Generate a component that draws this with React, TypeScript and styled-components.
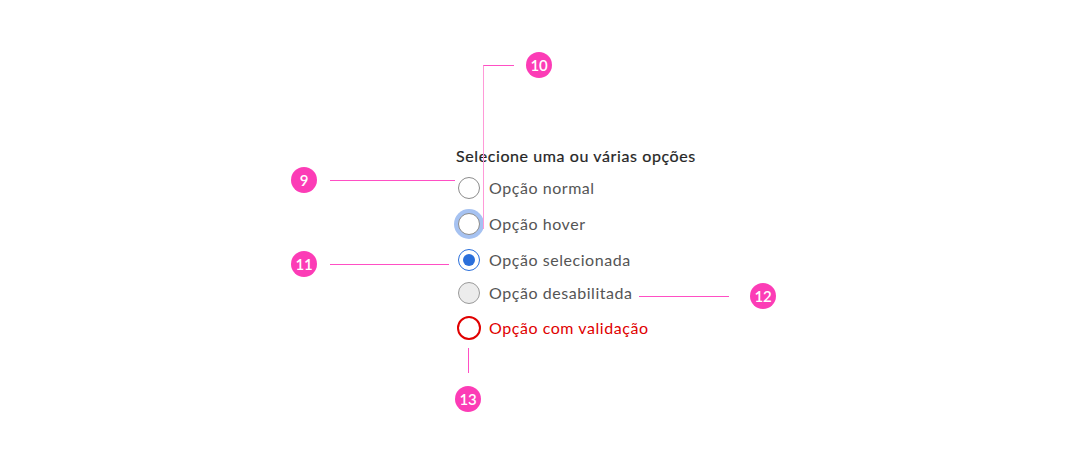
import React from "react";
import styled, { createGlobalStyle, css } from "styled-components";

const Global = createGlobalStyle`
  html, body { margin: 0; padding: 0; background: #ffffff; }
  body { font-family: "Lato", "Open Sans", sans-serif; }
`;

const Stage = styled.div`
  position: relative;
  width: 1067px;
  height: 465px;
  background: #fff;
  overflow: hidden;
`;

const Form = styled.fieldset`
  margin: 0;
  border: 0;
  padding: 146px 0 0 456px;
  display: flex;
  flex-direction: column;
  align-items: flex-start;
`;

const Legend = styled.div`
  font-size: 16px;
  line-height: 20px;
  font-weight: 400;
  color: #262626;
  letter-spacing: 0.6px;
  -webkit-text-stroke: 0.2px #262626;
`;

type Variant = "normal" | "hover" | "selected" | "disabled" | "error";

const Row = styled.label<{ $top: number }>`
  display: flex;
  align-items: center;
  gap: 9px;
  height: 24px;
  margin-top: ${(p) => p.$top}px;
  padding-left: 2px;
`;

const Circle = styled.span<{ $v: Variant }>`
  box-sizing: border-box;
  width: 22px;
  height: 22px;
  border-radius: 50%;
  border: 1px solid #8c8c8c;
  background: #fff;
  display: flex;
  align-items: center;
  justify-content: center;
  flex: none;
  ${(p) =>
    p.$v === "hover" &&
    css`
      box-shadow: 0 0 0 4px #a6c2f1;
    `}
  ${(p) =>
    p.$v === "selected" &&
    css`
      border-color: #2a6fdb;
      &::after {
        content: "";
        width: 12px;
        height: 12px;
        border-radius: 50%;
        background: #2a6fdb;
      }
    `}
  ${(p) =>
    p.$v === "disabled" &&
    css`
      background: #ececec;
      border-color: #9a9a9a;
    `}
  ${(p) =>
    p.$v === "error" &&
    css`
      width: 24px;
      height: 24px;
      margin-left: -1px;
      margin-right: -1px;
      border: 2px solid #e00000;
    `}
`;

const Label = styled.span<{ $error?: boolean }>`
  font-size: 16px;
  line-height: 20px;
  color: ${(p) => (p.$error ? "#e00000" : "#555555")};
  letter-spacing: 0.55px;
  margin-top: -1px;
`;

/* Annotation callouts (overlay) */
const Callout = styled.div<{ $x: number; $y: number; $dir: "row" | "column" }>`
  position: absolute;
  left: ${(p) => p.$x}px;
  top: ${(p) => p.$y}px;
  display: flex;
  flex-direction: ${(p) => p.$dir};
  align-items: center;
`;

const TopCallout = styled(Callout)`
  align-items: flex-start;
`;

const Badge = styled.div<{ $ml?: number }>`
  width: 26px;
  height: 26px;
  border-radius: 50%;
  background: #fc3cb6;
  color: #fff;
  font-family: "Lato", sans-serif;
  font-weight: 600;
  font-size: 15px;
  display: flex;
  align-items: center;
  justify-content: center;
  letter-spacing: -0.3px;
  flex: none;
  margin-left: ${(p) => p.$ml ?? 0}px;
`;

const HLine = styled.div<{ $w: number; $gap?: number }>`
  width: ${(p) => p.$w}px;
  height: 1px;
  background: #ff4fc4;
  margin: 0 ${(p) => p.$gap ?? 0}px;
`;

const VLine = styled.div<{ $h: number; $gap: number }>`
  width: 1px;
  height: ${(p) => p.$h}px;
  background: #ff4fc4;
  margin-bottom: ${(p) => p.$gap}px;
`;

const Elbow = styled.div`
  width: 31px;
  height: 164px;
  border-left: 1px solid #ff9ad8;
  border-top: 1px solid #ff4fc4;
  margin-top: 13px;
  box-sizing: border-box;
`;

const options: { v: Variant; text: string; top: number }[] = [
  { v: "normal", text: "Opção normal", top: 10 },
  { v: "hover", text: "Opção hover", top: 12 },
  { v: "selected", text: "Opção selecionada", top: 12 },
  { v: "disabled", text: "Opção desabilitada", top: 9 },
  { v: "error", text: "Opção com validação", top: 11 },
];

export default function App() {
  return (
    <>
      <Global />
      <Stage>
        <Form>
          <Legend>Selecione uma ou várias opções</Legend>
          {options.map((o) => (
            <Row key={o.text} $top={o.top}>
              <Circle $v={o.v} />
              <Label $error={o.v === "error"}>{o.text}</Label>
            </Row>
          ))}
        </Form>

        <Callout $x={291} $y={167} $dir="row">
          <Badge>9</Badge>
          <HLine $w={125} $gap={13} />
        </Callout>

        <TopCallout $x={483} $y={52} $dir="row">
          <Elbow />
          <Badge $ml={12}>10</Badge>
        </TopCallout>

        <Callout $x={291} $y={251} $dir="row">
          <Badge>11</Badge>
          <HLine $w={119} $gap={13} />
        </Callout>

        <Callout $x={639} $y={283} $dir="row">
          <HLine $w={90} />
          <Badge $ml={21}>12</Badge>
        </Callout>

        <Callout $x={455} $y={348} $dir="column">
          <VLine $h={25} $gap={13} />
          <Badge>13</Badge>
        </Callout>
      </Stage>
    </>
  );
}
